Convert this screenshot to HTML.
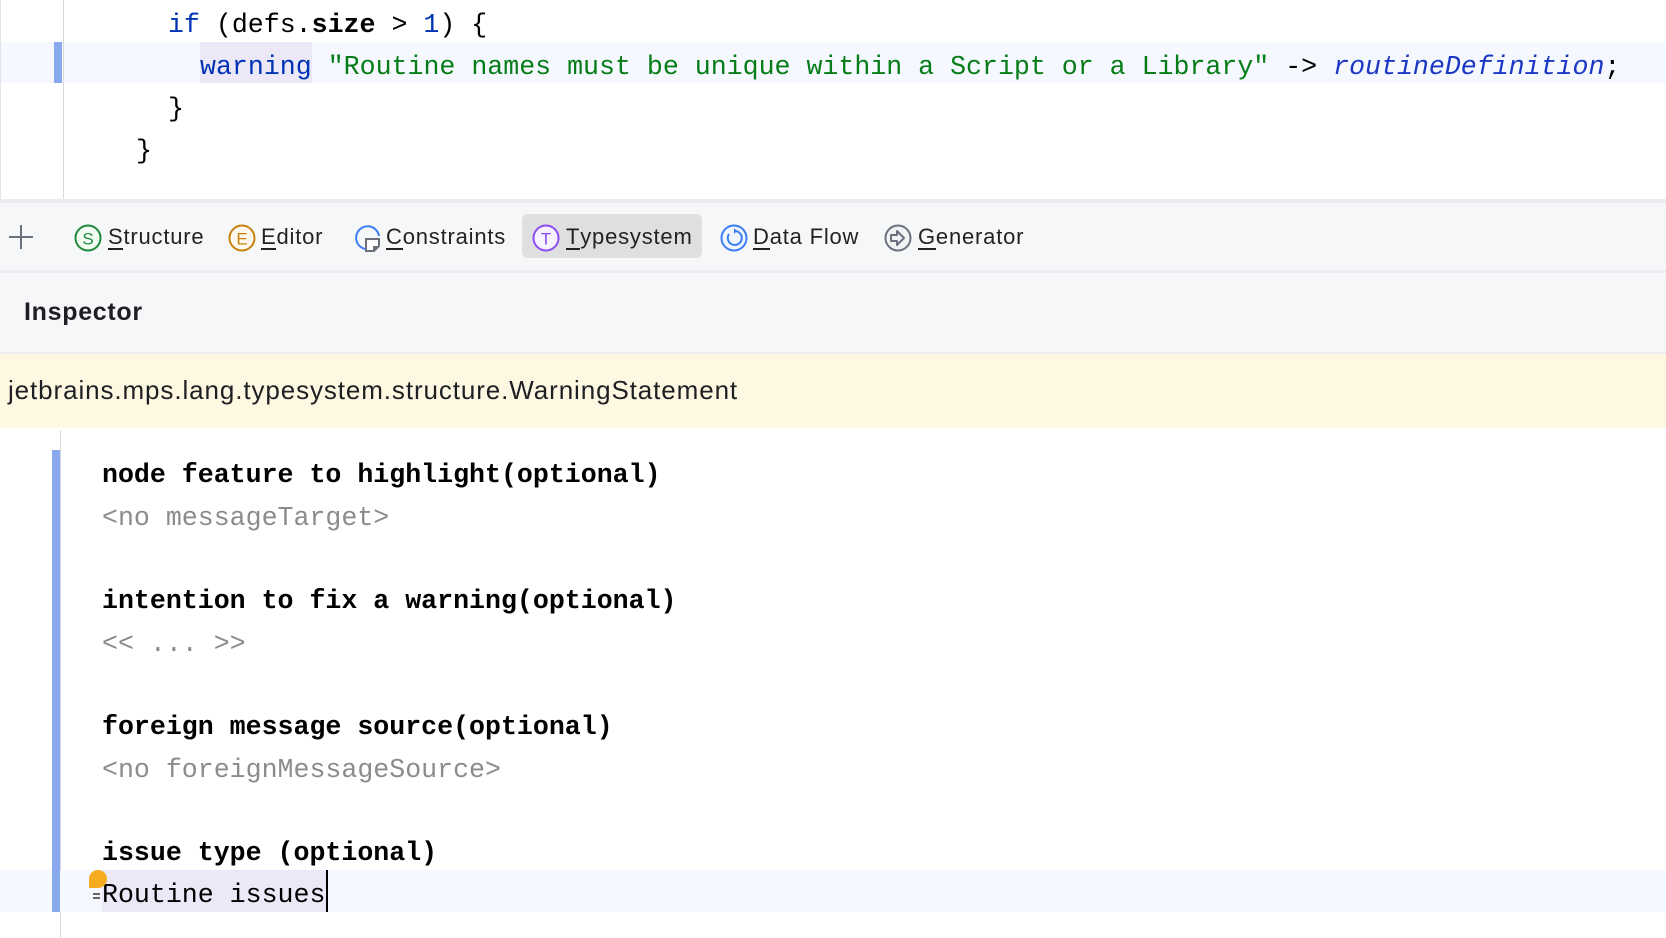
<!DOCTYPE html>
<html><head><meta charset="utf-8"><style>
*{margin:0;padding:0;box-sizing:border-box}
body{width:1666px;height:938px;overflow:hidden;background:#fff;position:relative;font-family:"Liberation Sans",sans-serif}
.a{position:absolute}
.mono{font-family:"Liberation Mono","DejaVu Sans Mono",monospace;font-size:26.6px;white-space:pre;line-height:42px}
.kw{color:#0033b3}
.str{color:#067d17}
.gr{color:#8c8c8c}
.tab{position:absolute;top:222px;height:30px;line-height:30px;font-size:22px;color:#222;letter-spacing:0.8px}
.tab u{text-decoration:none;border-bottom:2px solid #222;display:inline-block;line-height:22px}
.ic{position:absolute;top:224px}
</style></head><body>
<div class="a" style="left:0;top:42px;width:1666px;height:41px;background:#f5f8fe"></div>
<div class="a" style="left:54px;top:42px;width:8px;height:41px;background:#88a9ee"></div>
<div class="a" style="left:63px;top:0;width:1px;height:199px;background:#d8d9dc"></div>
<div class="a" style="left:0;top:0;width:1px;height:199px;background:#e4e4e4"></div>
<div class="a mono" style="left:168px;top:4px"><span class="kw">if</span> (defs.<b>size</b> &gt; <span class="kw">1</span>) {</div>
<div class="a" style="left:200px;top:42px;width:112px;height:41px;background:#ece8f8"></div>
<div class="a mono" style="left:200px;top:46px"><span class="kw">warning</span> <span class="str">"Routine names must be unique within a Script or a Library"</span> -&gt; <i style="color:#1c37c4">routineDefinition</i>;</div>
<div class="a mono" style="left:168px;top:88px">}</div>
<div class="a mono" style="left:136px;top:130px">}</div>
<div class="a" style="left:0;top:199px;width:1666px;height:4px;background:#ebecf0"></div>
<div class="a" style="left:0;top:203px;width:1666px;height:67px;background:#f6f7f9"></div>
<div class="a" style="left:0;top:270px;width:1666px;height:3px;background:#ebecf0"></div>
<div class="a" style="left:522px;top:214px;width:180px;height:44px;background:#dfdfe1;border-radius:6px"></div>
<svg class="a" style="left:7px;top:223px" width="28" height="28"><path d="M14 2V26M2 14H26" stroke="#6c707e" stroke-width="2"/></svg>
<svg class="ic" style="left:74px" width="28" height="28"><circle cx="14" cy="14" r="12.5" fill="#f2fcf3" stroke="#208a3c" stroke-width="2"/><text x="14" y="20.5" font-size="17" text-anchor="middle" fill="#208a3c" font-family="Liberation Sans">S</text></svg>
<div class="tab" style="left:108px"><u>S</u>tructure</div>
<svg class="ic" style="left:228px" width="28" height="28"><circle cx="14" cy="14" r="12.5" fill="#fff8ec" stroke="#c7810f" stroke-width="2"/><text x="14" y="20.5" font-size="17" text-anchor="middle" fill="#c7810f" font-family="Liberation Sans">E</text></svg>
<div class="tab" style="left:261px"><u>E</u>ditor</div>
<svg class="ic" style="left:354px" width="28" height="30"><path d="M11 25A11.5 11.5 0 1 1 25 12" fill="none" stroke="#3b7cf5" stroke-width="2"/><path d="M12 15H25V22L20 27H12Z" fill="#fff" stroke="#6c707e" stroke-width="2"/><path d="M19 27V22H25" fill="#6c707e"/></svg>
<div class="tab" style="left:386px"><u>C</u>onstraints</div>
<svg class="ic" style="left:532px" width="28" height="28"><circle cx="14" cy="14" r="12.5" fill="#f7f2ff" stroke="#8b4cf0" stroke-width="2"/><text x="14" y="20.5" font-size="17" text-anchor="middle" fill="#8b4cf0" font-family="Liberation Sans">T</text></svg>
<div class="tab" style="left:566px"><u>T</u>ypesystem</div>
<svg class="ic" style="left:720px" width="28" height="28"><circle cx="14" cy="14" r="12.5" fill="#f2f6ff" stroke="#3b7cf5" stroke-width="2"/><path d="M9 10A7 7 0 1 0 14 7" fill="none" stroke="#3b7cf5" stroke-width="2"/><path d="M14 4L17 7L14 10Z" fill="#3b7cf5"/></svg>
<div class="tab" style="left:753px"><u>D</u>ata Flow</div>
<svg class="ic" style="left:884px" width="28" height="28"><circle cx="14" cy="14" r="12.5" fill="#f2f3f5" stroke="#6c707e" stroke-width="2"/><path d="M7 11H13V7L20 14L13 21V17H7Z" fill="none" stroke="#6c707e" stroke-width="2" stroke-linejoin="round"/></svg>
<div class="tab" style="left:918px"><u>G</u>enerator</div>
<div class="a" style="left:0;top:273px;width:1666px;height:79px;background:#f6f7f9"></div>
<div class="a" style="left:24px;top:298px;font-size:25px;font-weight:bold;color:#1e1f22;letter-spacing:0.7px">Inspector</div>
<div class="a" style="left:0;top:352px;width:1666px;height:2px;background:#ebecf0"></div>
<div class="a" style="left:0;top:354px;width:1666px;height:74px;background:#fef8e3"></div>
<div class="a" style="left:8px;top:375px;font-size:26px;color:#1e1f22;letter-spacing:0.9px">jetbrains.mps.lang.typesystem.structure.WarningStatement</div>
<div class="a" style="left:60px;top:430px;width:1px;height:508px;background:#d8d9dc"></div>
<div class="a" style="left:0;top:870px;width:1666px;height:42px;background:#f5f8fe"></div>
<div class="a" style="left:52px;top:450px;width:8px;height:462px;background:#88a9ee"></div>
<div class="a mono" style="left:102px;top:454px;font-weight:bold">node feature to highlight(optional)</div>
<div class="a mono gr" style="left:102px;top:497px">&lt;no messageTarget&gt;</div>
<div class="a mono" style="left:102px;top:580px;font-weight:bold">intention to fix a warning(optional)</div>
<div class="a mono gr" style="left:102px;top:623px">&lt;&lt; ... &gt;&gt;</div>
<div class="a mono" style="left:102px;top:706px;font-weight:bold">foreign message source(optional)</div>
<div class="a mono gr" style="left:102px;top:749px">&lt;no foreignMessageSource&gt;</div>
<div class="a mono" style="left:102px;top:832px;font-weight:bold">issue type (optional)</div>
<div class="a" style="left:102px;top:870px;width:224px;height:42px;background:#ece8f8"></div>
<div class="a mono" style="left:102px;top:874px">Routine issues</div>
<div class="a" style="left:326px;top:870px;width:2px;height:42px;background:#000"></div>
<div class="a" style="left:89px;top:870px;width:18px;height:18px;border-radius:9px 9px 9px 0;background:#f4ac1e"></div>
<div class="a" style="left:93px;top:893px;width:7px;height:2px;background:#666"></div>
<div class="a" style="left:93px;top:897px;width:7px;height:2px;background:#666"></div>
</body></html>
